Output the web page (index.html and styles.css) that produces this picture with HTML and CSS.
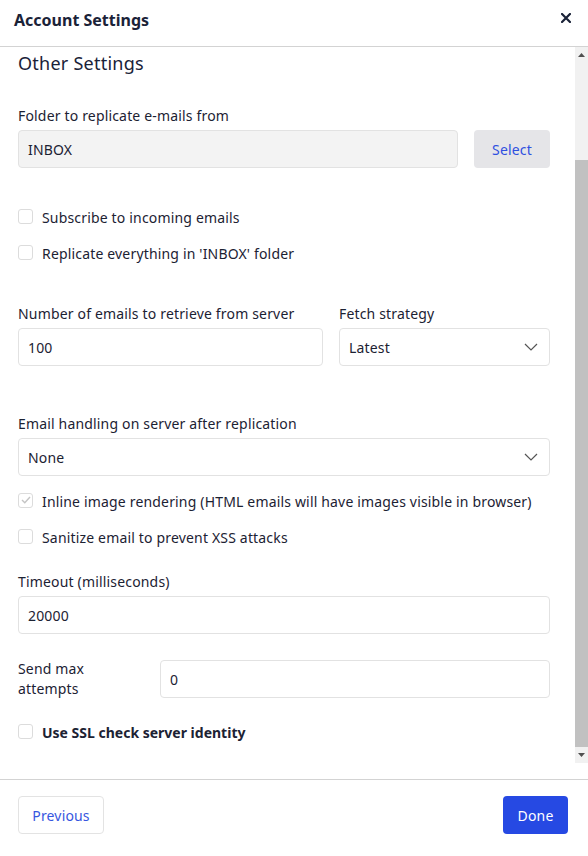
FILE: index.html
```html
<!DOCTYPE html>
<html>
<head>
<meta charset="utf-8">
<link rel="stylesheet" href="styles.css">
</head>
<body>
<div class="modal">
  <header class="modal-header">
    <h1 class="modal-title">Account Settings</h1>
    <button class="close-btn" aria-label="Close">
      <svg width="10" height="10" viewBox="0 0 10 10"><path d="M1 1L9 9M9 1L1 9" stroke="#1a2238" stroke-width="2.2" stroke-linecap="square"/></svg>
    </button>
  </header>
  <div class="modal-body">
    <div class="content">
      <h2 class="section-title">Other Settings</h2>

      <div class="field folder">
        <label class="label">Folder to replicate e-mails from</label>
        <div class="row">
          <div class="input readonly grow">INBOX</div>
          <button class="btn btn-select">Select</button>
        </div>
      </div>

      <div class="checks first-checks">
        <label class="check"><span class="box"></span>Subscribe to incoming emails</label>
        <label class="check"><span class="box"></span>Replicate everything in 'INBOX' folder</label>
      </div>

      <div class="two-col">
        <div class="field col-left">
          <label class="label">Number of emails to retrieve from server</label>
          <div class="input">100</div>
        </div>
        <div class="field col-right">
          <label class="label">Fetch strategy</label>
          <div class="input select">Latest<svg class="chev" width="14" height="8" viewBox="0 0 14 8"><path d="M1 1l6 6 6-6" fill="none" stroke="#555" stroke-width="1.2"/></svg></div>
        </div>
      </div>

      <div class="field handling">
        <label class="label">Email handling on server after replication</label>
        <div class="input select">None<svg class="chev" width="14" height="8" viewBox="0 0 14 8"><path d="M1 1l6 6 6-6" fill="none" stroke="#555" stroke-width="1.2"/></svg></div>
      </div>

      <div class="checks mid-checks">
        <label class="check"><span class="box checked"><svg width="10" height="8" viewBox="0 0 10 8"><path d="M1 4l2.8 2.8L9 1" fill="none" stroke="#c4c4c4" stroke-width="1.4"/></svg></span>Inline image rendering (HTML emails will have images visible in browser)</label>
        <label class="check"><span class="box"></span>Sanitize email to prevent XSS attacks</label>
      </div>

      <div class="field timeout">
        <label class="label">Timeout (milliseconds)</label>
        <div class="input">20000</div>
      </div>

      <div class="inline-field">
        <label class="label inline-label">Send max attempts</label>
        <div class="input grow">0</div>
      </div>

      <div class="checks last-checks">
        <label class="check bold"><span class="box"></span>Use SSL check server identity</label>
      </div>
    </div>
    <div class="scrollbar">
      <div class="sb-btn"><svg width="7" height="4" viewBox="0 0 7 4"><path d="M0 4L3.5 0L7 4Z" fill="#505050"/></svg></div>
      <div class="sb-track">
        <div class="sb-thumb"></div>
      </div>
      <div class="sb-btn"><svg width="7" height="4" viewBox="0 0 7 4"><path d="M0 0L3.5 4L7 0Z" fill="#505050"/></svg></div>
    </div>
  </div>
  <footer class="modal-footer">
    <button class="btn btn-prev">Previous</button>
    <button class="btn btn-done">Done</button>
  </footer>
</div>
</body>
</html>
```
FILE: styles.css
```css
* { box-sizing: border-box; }
html, body { margin: 0; padding: 0; background: #fff; }
body {
  font-family: "Noto Sans", "Open Sans", sans-serif;
  color: #1c2233;
  font-size: 14px;
  letter-spacing: 0.17px;
  width: 588px;
  height: 856px;
  overflow: hidden;
}
.modal { display: flex; flex-direction: column; height: 856px; }
.modal-header {
  height: 47px;
  flex: none;
  display: flex;
  align-items: center;
  justify-content: space-between;
  padding: 0 17px 6px 14px;
  border-bottom: 1px solid #d3d3d3;
}
.modal-title { margin: 0; font-size: 16px; letter-spacing: 0; font-weight: 700; color: #1a2238; line-height: 20px; }
.close-btn { border: none; background: none; padding: 0; width: 10px; height: 10px; display: flex; align-items: center; justify-content: center; margin-top: -4px; }
.modal-body {
  height: 716px;
  flex: none;
  display: flex;
}
.content { flex: 1; padding: 3px 25px 0 18px; }
.section-title { margin: 0; font-size: 18px; letter-spacing: 0.25px; font-weight: 400; line-height: 26px; color: #1a2238; }
.field { display: flex; flex-direction: column; }
.label { font-size: 14px; line-height: 20px; margin-bottom: 4px; color: #1c2233; }
.folder { margin-top: 30px; }
.row { display: flex; gap: 16px; }
.grow { flex: 1; }
.input {
  height: 38px;
  border: 1px solid #e2e2e2;
  border-radius: 4px;
  padding: 0 9px;
  display: flex;
  align-items: center;
  font-size: 14px;
  color: #1c2233;
  background: #fff;
}
.input.readonly { background: #f3f3f3; }
.select { justify-content: space-between; padding-right: 11px; }
.btn {
  font-family: inherit;
  font-size: 14px;
  letter-spacing: 0.17px;
  height: 38px;
  border-radius: 4px;
  border: 1px solid transparent;
  padding: 0;
  cursor: pointer;
}
.btn-select { width: 76px; background: #e5e5e8; color: #2f50e0; }
.checks { display: flex; flex-direction: column; gap: 16px; }
.check { display: flex; align-items: center; gap: 9px; line-height: 20px; }
.check.bold { font-weight: 700; letter-spacing: 0; }
.box {
  width: 15px; height: 15px; border: 1px solid #dcdcdc; border-radius: 3px;
  display: flex; align-items: center; justify-content: center; flex: none;
  margin-top: -4px; background: #fff;
}
.first-checks { margin-top: 40px; }
.two-col { display: flex; gap: 16px; margin-top: 40px; }
.col-left { flex: none; width: 305px; }
.col-right { flex: 1; }
.handling { margin-top: 48px; }
.mid-checks { margin-top: 16px; }
.timeout { margin-top: 24px; }
.inline-field { display: flex; align-items: center; gap: 42px; margin-top: 25px; }
.inline-label { width: 100px; flex: none; margin: 0; line-height: 20px; }
.last-checks { margin-top: 24px; }
.scrollbar { width: 13px; flex: none; display: flex; flex-direction: column; background: #f1f1f1; }
.sb-btn { height: 16px; display: flex; align-items: center; justify-content: center; }
.sb-track { flex: 1; display: flex; flex-direction: column; justify-content: flex-end; }
.sb-thumb { height: 587px; background: #c1c1c1; }
.modal-footer {
  margin-top: 16px;
  border-top: 1px solid #d3d3d3;
  display: flex;
  justify-content: space-between;
  padding: 16px 20px 0 18px;
}
.btn-prev { background: #fff; border-color: #e3e3e3; color: #3656e0; width: 86px; }
.btn-done { background: #2649e3; color: #fff; width: 65px; }
```
